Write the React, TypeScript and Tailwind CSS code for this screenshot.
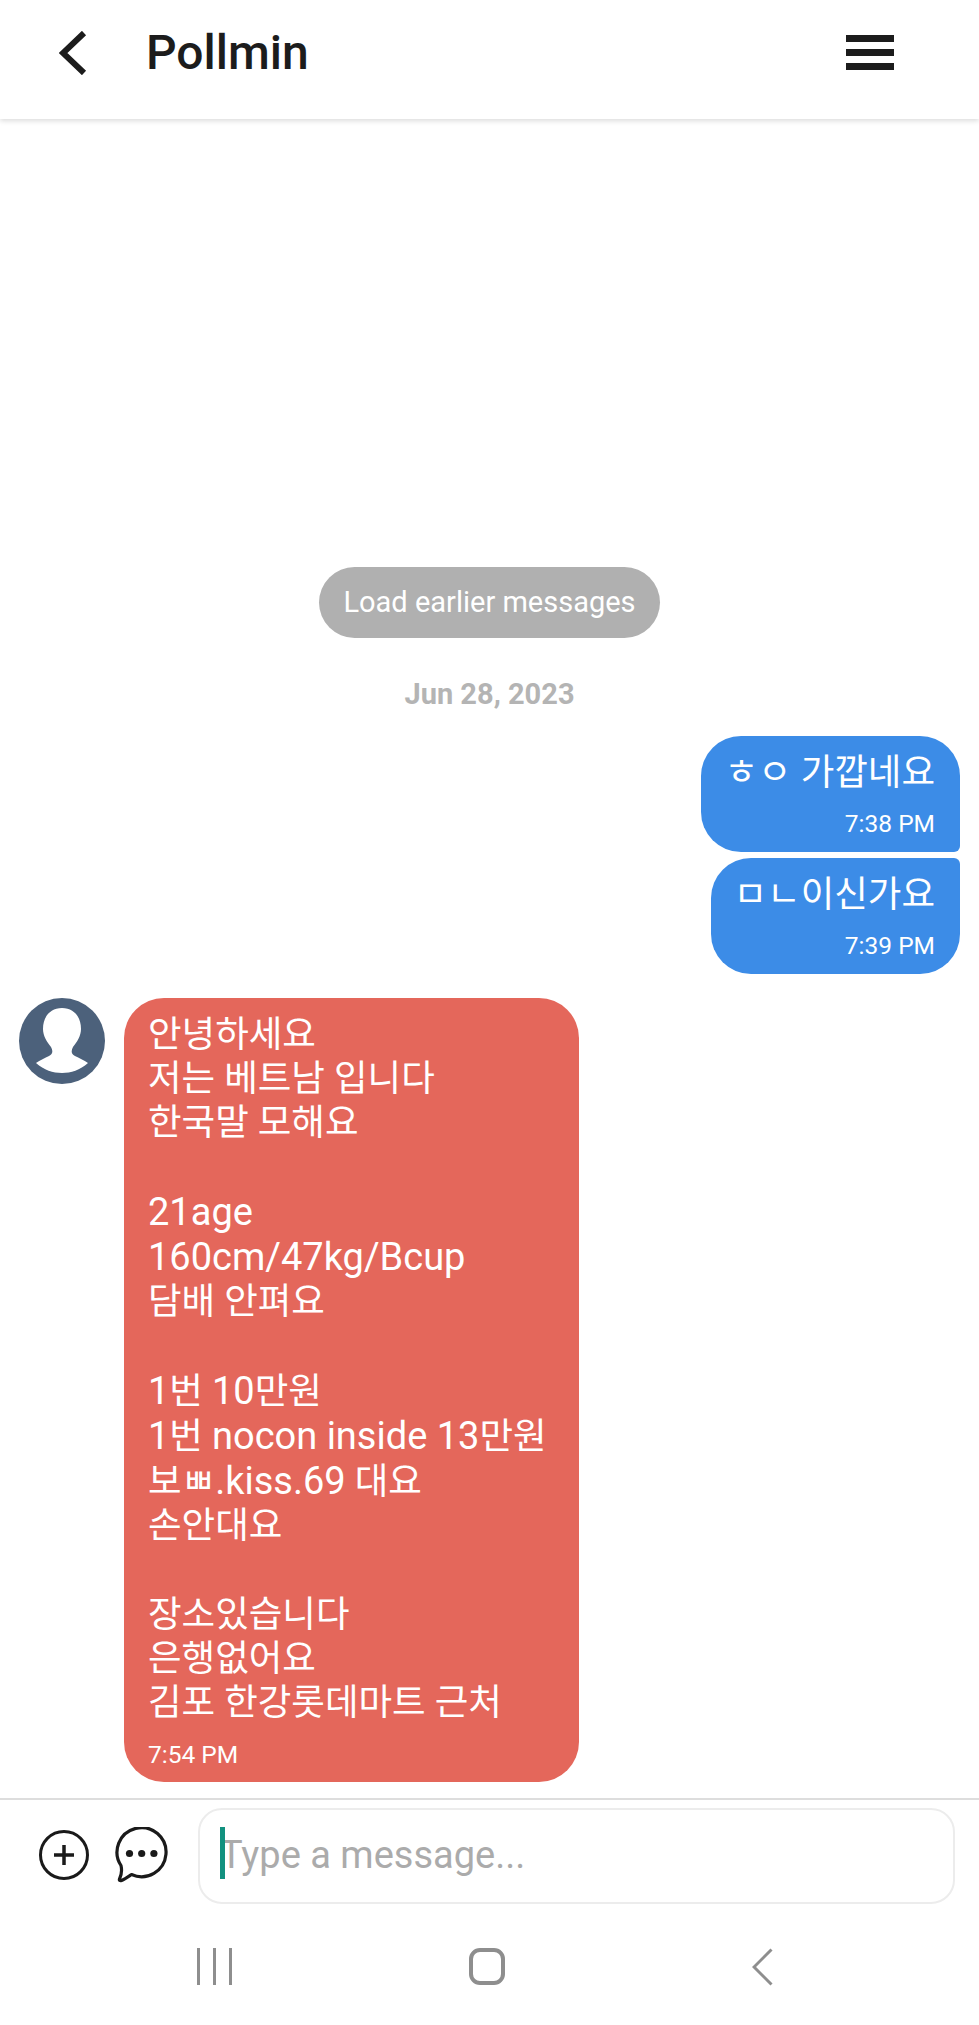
import React from 'react';

const Latin = ({ children }: { children: React.ReactNode }) => <span className="text-[38px]">{children}</span>;

const Header = () => (
  <div className="h-[119px] shrink-0 flex items-center pl-[59px] pr-[85px] pb-[14px] bg-white shadow-[0_2px_5px_rgba(0,0,0,0.14)] z-10">
    <svg width="30" height="44" viewBox="0 0 30 44" className="shrink-0">
      <path d="M25 2 L4 22 L25 42" fill="none" stroke="#1c1c1c" strokeWidth="6" />
    </svg>
    <div className="ml-[57px] text-[48px] leading-none font-medium text-[#1c1c1c]">Pollmin</div>
    <div className="ml-auto flex flex-col gap-[7px] w-[48px]">
      <div className="h-[7px] bg-[#1c1c1c]" />
      <div className="h-[7px] bg-[#1c1c1c]" />
      <div className="h-[7px] bg-[#1c1c1c]" />
    </div>
  </div>
);

const SentBubble = ({ text, time, corner }: { text: string; time: string; corner: string }) => (
  <div className={`self-end bg-[#3c8ce7] text-white pl-[23px] pr-[25px] pt-[15px] h-[116px] ${corner}`}>
    <div className="text-[36.5px] leading-[44px]">{text}</div>
    <div className="text-[24.5px] leading-[30px] mt-[14px] text-right">{time}</div>
  </div>
);

const Avatar = () => (
  <svg width="86" height="86" viewBox="0 0 86 86" className="shrink-0">
    <circle cx="43" cy="43" r="43" fill="#4c617b" />
    <path
      d="M43 10 C55 10 62 19 62 31 C62 38 58 44 54 49 C52 53 52 56 56 58 C60 60 65 62 69 65 C61 72 52 75 43 75 C34 75 25 72 17 65 C21 62 26 60 30 58 C34 56 34 53 32 49 C28 44 24 38 24 31 C24 19 31 10 43 10 Z"
      fill="#fff"
    />
  </svg>
);

const Composer = () => (
  <div className="h-[129px] shrink-0 border-t-2 border-[#dddddd] flex items-start pl-[39px] pr-[24px] pt-[8px] bg-white">
    <svg width="50" height="50" viewBox="0 0 50 50" className="mt-[22px] shrink-0">
      <circle cx="25" cy="25" r="23.5" fill="none" stroke="#1a1a1a" strokeWidth="3" />
      <path d="M25 15 V35 M15 25 H35" stroke="#1a1a1a" strokeWidth="3.5" />
    </svg>
    <svg width="55" height="56" viewBox="0 0 55 56" className="ml-[26px] mt-[19px] shrink-0">
      <path
        d="M6 38.5 C7 43 6.5 48 4.5 52 C4 53.5 5 54 6.5 53.5 C10 52 13.5 49.5 16.5 47.5 A24.5 24.5 0 1 0 6 38.5 Z"
        fill="none"
        stroke="#1a1a1a"
        strokeWidth="3.2"
        strokeLinejoin="round"
      />
      <circle cx="14.5" cy="26.5" r="3.6" fill="#1a1a1a" />
      <circle cx="26.7" cy="26.5" r="3.6" fill="#1a1a1a" />
      <circle cx="38.9" cy="26.5" r="3.6" fill="#1a1a1a" />
    </svg>
    <div className="ml-[28px] flex-1 h-[96px] rounded-[24px] border-2 border-[#ececec] flex items-center pl-[20px] relative">
      <div className="absolute left-[20px] top-[17px] w-[5px] h-[52px] bg-[#12917f]" />
      <span className="text-[38px] leading-none text-[#ababab] -mt-[3px]">Type a message...</span>
    </div>
  </div>
);

const NavBar = () => (
  <div className="h-[98px] shrink-0 bg-white flex items-start pl-[197px] pt-[21px]">
    <div className="flex gap-[13px] h-[37px]">
      <div className="w-[3px] bg-[#8e8e8e]" />
      <div className="w-[3px] bg-[#8e8e8e]" />
      <div className="w-[3px] bg-[#8e8e8e]" />
    </div>
    <div className="ml-[237px] w-[36px] h-[37px] rounded-[11px] border-[4px] border-[#8e8e8e]" />
    <svg width="21" height="38" viewBox="0 0 21 38" className="ml-[247px]">
      <path d="M19.5 1.5 L2 19 L19.5 36.5" fill="none" stroke="#8e8e8e" strokeWidth="3" />
    </svg>
  </div>
);

export default function App() {
  return (
    <div
      className="w-[979px] h-[2025px] flex flex-col bg-white overflow-hidden"
      style={{ fontFamily: 'Roboto, "Noto Sans CJK KR", sans-serif' }}
    >
      <Header />
      <div className="flex-1 flex flex-col justify-end items-stretch pb-[16px] pl-[19px] pr-[19px]">
        <div className="self-center w-[341px] h-[71px] rounded-full bg-[#b0b0b0] text-white text-[29px] flex items-center justify-center">
          Load earlier messages
        </div>
        <div className="self-center mt-[38px] mb-[24px] text-[29px] leading-[36px] font-bold text-[#b4b4b4]">Jun 28, 2023</div>
        <SentBubble text="ㅎㅇ 가깝네요" time="7:38 PM" corner="rounded-[40px] rounded-br-[6px]" />
        <div className="h-[6px]" />
        <SentBubble text="ㅁㄴ이신가요" time="7:39 PM" corner="rounded-[40px] rounded-tr-[6px]" />
        <div className="flex items-start gap-[19px] mt-[24px]">
          <Avatar />
          <div className="w-[455px] h-[784px] rounded-[40px] bg-[#e4675b] text-white pl-[24px] pt-[15px]">
            <div className="text-[36.5px] leading-[44.2px]">
              <div>안녕하세요</div>
              <div>저는 베트남 입니다</div>
              <div>한국말 모해요</div>
              <div className="h-[44.2px]" />
              <div><Latin>21age</Latin></div>
              <div><Latin>160cm/47kg/Bcup</Latin></div>
              <div>담배 안펴요</div>
              <div className="h-[44.2px]" />
              <div><Latin>1</Latin>번 <Latin>10</Latin>만원</div>
              <div><Latin>1</Latin>번 <Latin>nocon inside 13</Latin>만원</div>
              <div>보ㅃ<Latin>.kiss.69</Latin> 대요</div>
              <div>손안대요</div>
              <div className="h-[44.2px]" />
              <div>장소있습니다</div>
              <div>은행없어요</div>
              <div>김포 한강롯데마트 근처</div>
            </div>
            <div className="text-[24.5px] leading-[30px] mt-[15px]">7:54 PM</div>
          </div>
        </div>
      </div>
      <Composer />
      <NavBar />
    </div>
  );
}
